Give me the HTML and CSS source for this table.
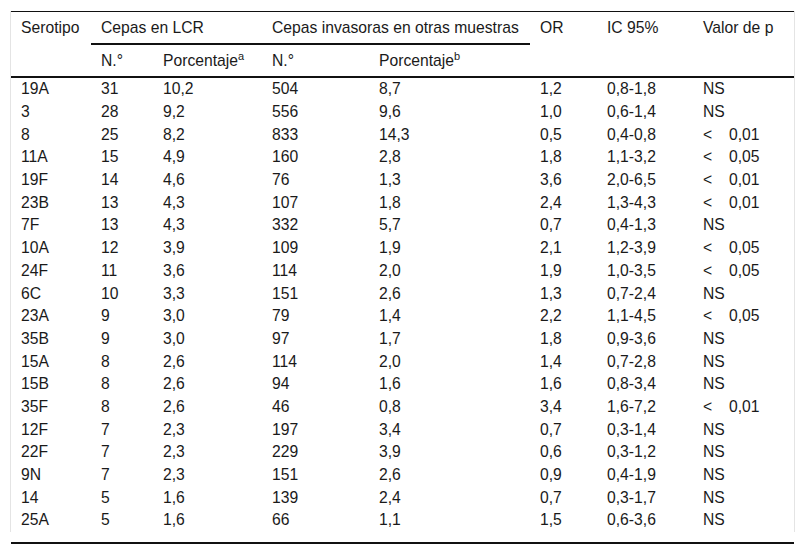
FILE: index.html
```html
<!DOCTYPE html>
<html lang="es">
<head>
<meta charset="utf-8">
<title>Serotipos</title>
<link rel="stylesheet" href="styles.css">
</head>
<body>
<div class="wrap">
<table class="data">
<colgroup>
<col class="c1"><col class="c2"><col class="c3"><col class="c4"><col class="c5"><col class="c6"><col class="c7"><col class="c8">
</colgroup>
<thead>
<tr class="h1">
<th rowspan="2">Serotipo</th>
<th colspan="2" class="grp">Cepas en LCR</th>
<th colspan="2" class="grp">Cepas invasoras en otras muestras</th>
<th rowspan="2">OR</th>
<th rowspan="2">IC 95%</th>
<th rowspan="2">Valor de p</th>
</tr>
<tr class="h2">
<th>N.°</th>
<th>Porcentaje<sup>a</sup></th>
<th>N.°</th>
<th>Porcentaje<sup>b</sup></th>
</tr>
</thead>
<tbody>
<tr><td>19A</td><td>31</td><td>10,2</td><td>504</td><td>8,7</td><td>1,2</td><td>0,8-1,8</td><td>NS</td></tr>
<tr><td>3</td><td>28</td><td>9,2</td><td>556</td><td>9,6</td><td>1,0</td><td>0,6-1,4</td><td>NS</td></tr>
<tr><td>8</td><td>25</td><td>8,2</td><td>833</td><td>14,3</td><td>0,5</td><td>0,4-0,8</td><td><span class="lt">&lt;</span>0,01</td></tr>
<tr><td>11A</td><td>15</td><td>4,9</td><td>160</td><td>2,8</td><td>1,8</td><td>1,1-3,2</td><td><span class="lt">&lt;</span>0,05</td></tr>
<tr><td>19F</td><td>14</td><td>4,6</td><td>76</td><td>1,3</td><td>3,6</td><td>2,0-6,5</td><td><span class="lt">&lt;</span>0,01</td></tr>
<tr><td>23B</td><td>13</td><td>4,3</td><td>107</td><td>1,8</td><td>2,4</td><td>1,3-4,3</td><td><span class="lt">&lt;</span>0,01</td></tr>
<tr><td>7F</td><td>13</td><td>4,3</td><td>332</td><td>5,7</td><td>0,7</td><td>0,4-1,3</td><td>NS</td></tr>
<tr><td>10A</td><td>12</td><td>3,9</td><td>109</td><td>1,9</td><td>2,1</td><td>1,2-3,9</td><td><span class="lt">&lt;</span>0,05</td></tr>
<tr><td>24F</td><td>11</td><td>3,6</td><td>114</td><td>2,0</td><td>1,9</td><td>1,0-3,5</td><td><span class="lt">&lt;</span>0,05</td></tr>
<tr><td>6C</td><td>10</td><td>3,3</td><td>151</td><td>2,6</td><td>1,3</td><td>0,7-2,4</td><td>NS</td></tr>
<tr><td>23A</td><td>9</td><td>3,0</td><td>79</td><td>1,4</td><td>2,2</td><td>1,1-4,5</td><td><span class="lt">&lt;</span>0,05</td></tr>
<tr><td>35B</td><td>9</td><td>3,0</td><td>97</td><td>1,7</td><td>1,8</td><td>0,9-3,6</td><td>NS</td></tr>
<tr><td>15A</td><td>8</td><td>2,6</td><td>114</td><td>2,0</td><td>1,4</td><td>0,7-2,8</td><td>NS</td></tr>
<tr><td>15B</td><td>8</td><td>2,6</td><td>94</td><td>1,6</td><td>1,6</td><td>0,8-3,4</td><td>NS</td></tr>
<tr><td>35F</td><td>8</td><td>2,6</td><td>46</td><td>0,8</td><td>3,4</td><td>1,6-7,2</td><td><span class="lt">&lt;</span>0,01</td></tr>
<tr><td>12F</td><td>7</td><td>2,3</td><td>197</td><td>3,4</td><td>0,7</td><td>0,3-1,4</td><td>NS</td></tr>
<tr><td>22F</td><td>7</td><td>2,3</td><td>229</td><td>3,9</td><td>0,6</td><td>0,3-1,2</td><td>NS</td></tr>
<tr><td>9N</td><td>7</td><td>2,3</td><td>151</td><td>2,6</td><td>0,9</td><td>0,4-1,9</td><td>NS</td></tr>
<tr><td>14</td><td>5</td><td>1,6</td><td>139</td><td>2,4</td><td>0,7</td><td>0,3-1,7</td><td>NS</td></tr>
<tr><td>25A</td><td>5</td><td>1,6</td><td>66</td><td>1,1</td><td>1,5</td><td>0,6-3,6</td><td>NS</td></tr>
</tbody>
</table>
</div>
<div class="foot-rule"></div>
</body>
</html>
```
FILE: styles.css
```css
html, body {
  background: #fff;
}
body {
  margin: 11px 10px 0 10px;
  font-family: "Liberation Sans", Arial, sans-serif;
  font-size: 15.7px;
  color: #1a1a1a;
}
.wrap {
  border-left: 1px solid #e4e4e4;
  border-right: 1px solid #e4e4e4;
}
.data {
  width: 100%;
  border-collapse: collapse;
  table-layout: fixed;
  border-top: 1px solid #111;
}
.c1 { width: 80px; }
.c2 { width: 62px; }
.c3 { width: 109px; }
.c4 { width: 107px; }
.c5 { width: 161px; }
.c6 { width: 67px; }
.c7 { width: 96px; }
.c8 { width: 101px; }
th, td {
  text-align: left;
  font-weight: normal;
  padding: 0 10px;
  white-space: nowrap;
}
thead {
  border-bottom: 2px solid #111;
}
.h1 th {
  height: 31px;
  vertical-align: top;
  padding-top: 7px;
}
.h1 th.grp {
  vertical-align: middle;
  padding-top: 0;
  border-bottom: 2px solid #111;
}
.h2 th {
  height: 31px;
  vertical-align: middle;
}
sup {
  font-size: 11px;
  line-height: 0;
  vertical-align: 6px;
}
td {
  height: 22.7px;
  line-height: 18px;
}
.lt {
  display: inline-block;
  width: 26px;
}
.foot-rule {
  margin-top: 10px;
  height: 2px;
  background: #111;
  margin-left: 1px;
  margin-right: 1px;
}
```
